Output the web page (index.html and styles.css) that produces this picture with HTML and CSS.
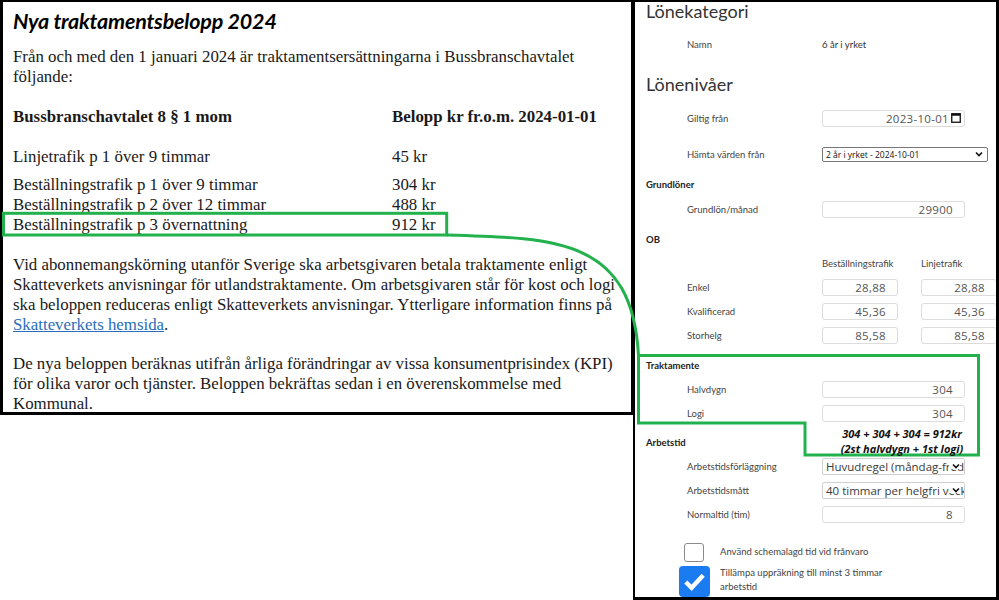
FILE: index.html
```html
<!DOCTYPE html>
<html lang="sv">
<head>
  <meta charset="UTF-8">
  <meta name="viewport" content="width=device-width, initial-scale=1.0">
  <title>Traktamente 2024</title>
  <link rel="stylesheet" href="styles.css">
</head>
<body>
  <div class="sheet">
    <article class="notice">
      <h1>Nya traktamentsbelopp 2024</h1>
      <p class="intro">Från och med den 1 januari 2024 är traktamentsersättningarna i Bussbranschavtalet<br>följande:</p>
      <div class="rates">
        <div class="rates-head"><span>Bussbranschavtalet 8 § 1 mom</span><span>Belopp kr fr.o.m. 2024-01-01</span></div>
        <div class="rate rate-first"><span>Linjetrafik p 1 över 9 timmar</span><span>45 kr</span></div>
        <div class="rate rate-group"><span>Beställningstrafik p 1 över 9 timmar</span><span>304 kr</span></div>
        <div class="rate"><span>Beställningstrafik p 2 över 12 timmar</span><span>488 kr</span></div>
        <div class="rate"><span>Beställningstrafik p 3 övernattning</span><span>912 kr</span></div>
      </div>
      <p class="body-text">Vid abonnemangskörning utanför Sverige ska arbetsgivaren betala traktamente enligt<br>Skatteverkets anvisningar för utlandstraktamente. Om arbetsgivaren står för kost och logi<br>ska beloppen reduceras enligt Skatteverkets anvisningar. Ytterligare information finns på<br><a href="#">Skatteverkets hemsida</a>.</p>
      <p class="body-text last">De nya beloppen beräknas utifrån årliga förändringar av vissa konsumentprisindex (KPI)<br>för olika varor och tjänster. Beloppen bekräftas sedan i en överenskommelse med<br>Kommunal.</p>
    </article>

    <section class="form-panel">
      <h2 class="panel-title">Lönekategori</h2>
      <div class="field f-name"><span class="label">Namn</span><span class="value">6 år i yrket</span></div>

      <h2 class="panel-title f-levels">Lönenivåer</h2>
      <div class="field f-gap"><span class="label">Giltig från</span>
        <div class="box date">2023-10-01
          <svg class="cal" viewBox="0 0 10 10" width="10" height="10"><rect x="0.75" y="0.75" width="8.5" height="8.5" fill="none" stroke="#111" stroke-width="1.3"/><rect x="0.75" y="0.75" width="8.5" height="2" fill="#111"/></svg>
        </div>
      </div>
      <div class="field f-gap"><span class="label">Hämta värden från</span>
        <div class="box select small">2 år i yrket - 2024-10-01<svg class="chev" viewBox="0 0 8 6" width="8" height="6"><path d="M1 1.5 L4 4.5 L7 1.5" fill="none" stroke="#111" stroke-width="1.6"/></svg></div>
      </div>

      <h3 class="group g-base">Grundlöner</h3>
      <div class="field f-tight"><span class="label">Grundlön/månad</span><div class="box num">29900</div></div>

      <h3 class="group g-ob">OB</h3>
      <div class="field cols f-cols"><span class="label"></span><div class="pair"><span>Beställningstrafik</span><span>Linjetrafik</span></div></div>
      <div class="field f-tight"><span class="label">Enkel</span><div class="pair"><div class="box num half">28,88</div><div class="box num half">28,88</div></div></div>
      <div class="field"><span class="label">Kvalificerad</span><div class="pair"><div class="box num half">45,36</div><div class="box num half">45,36</div></div></div>
      <div class="field"><span class="label">Storhelg</span><div class="pair"><div class="box num half">85,58</div><div class="box num half">85,58</div></div></div>

      <h3 class="group g-trakt">Traktamente</h3>
      <div class="field f-snug"><span class="label">Halvdygn</span><div class="box num">304</div></div>
      <div class="field"><span class="label">Logi</span><div class="box num">304</div></div>

      <h3 class="group g-work">Arbetstid</h3>
      <div class="field f-snug"><span class="label">Arbetstidsförläggning</span>
        <div class="box select">Huvudregel (måndag-fredag)<svg class="chev" viewBox="0 0 8 6" width="8" height="6"><path d="M1 1.5 L4 4.5 L7 1.5" fill="none" stroke="#111" stroke-width="1.6"/></svg></div>
      </div>
      <div class="field"><span class="label">Arbetstidsmått</span>
        <div class="box select">40 timmar per helgfri vecka<svg class="chev" viewBox="0 0 8 6" width="8" height="6"><path d="M1 1.5 L4 4.5 L7 1.5" fill="none" stroke="#111" stroke-width="1.6"/></svg></div>
      </div>
      <div class="field"><span class="label">Normaltid (tim)</span><div class="box num">8</div></div>

      <div class="check c-first"><span class="tick"></span><span class="check-label">Använd schemalagd tid vid frånvaro</span></div>
      <div class="check c-second"><span class="tick on"><svg viewBox="0 0 32 32" width="31" height="31"><path d="M7 16.5 L13 22.5 L25 9.5" fill="none" stroke="#fff" stroke-width="4.5"/></svg></span><span class="check-label">Tillämpa uppräkning till minst 3 timmar<br>arbetstid</span></div>
    </section>

    <!-- green callout from the rate row to the traktamente fields -->
    <svg class="marks" viewBox="0 0 999 600" width="999" height="600">
      <rect x="3.5" y="213.3" width="443.2" height="21.7" fill="none" stroke="#22b14c" stroke-width="3"/>
      <path d="M446.7 235 C560 238, 632 240, 638.5 355.5" fill="none" stroke="#22b14c" stroke-width="3"/>
      <path d="M638.5 355.5 H978.5 V455 H805 V423 H638.5 Z" fill="none" stroke="#22b14c" stroke-width="3"/>
    </svg>
    <div class="mark-note">304 + 304 + 304 = 912kr<br>(2st halvdygn + 1st logi)</div>
  </div>
</body>
</html>
```

FILE: styles.css
```css
body {
  margin: 0;
  background: #fff;
}
.sheet {
  position: relative;
  display: flex;
  align-items: flex-start;
  width: 999px;
  height: 600px;
  overflow: hidden;
}

/* left: the notice */
.notice {
  box-sizing: border-box;
  width: 633px;
  height: 415px;
  border: 2px solid #000;
  border-left-width: 3px;
  border-bottom-width: 3px;
  padding: 0 10px;
  font-family: "Liberation Serif", serif;
  font-size: 16.85px;
  line-height: 20px;
  color: #1a1a1a;
  white-space: nowrap;
}
.notice h1 {
  margin: 5px 0 0;
  font-family: Lato, sans-serif;
  font-style: italic;
  font-weight: 700;
  font-size: 21.5px;
  letter-spacing: -0.2px;
  line-height: 28px;
  color: #000;
}
.intro {
  margin: 12px 0 0;
}
.rates {
  margin-top: 20px;
}
.rate,
.rates-head {
  display: grid;
  grid-template-columns: 379px 1fr;
}
.rates-head {
  font-weight: 700;
}
.rate-first {
  margin-top: 20px;
}
.rate-group {
  margin-top: 8px;
}
.body-text {
  margin: 20px 0 0;
}
.body-text.last {
  margin-top: 19px;
}
.body-text a {
  color: #2a6ebb;
}

/* right: the salary form */
.form-panel {
  box-sizing: border-box;
  width: 366px;
  height: 600px;
  border: 2px solid #000;
  border-right-width: 3px;
  border-bottom-width: 3px;
  font-family: Lato, sans-serif;
  font-size: 9.5px;
  color: #444;
  overflow: hidden;
}
.panel-title {
  margin: -1px 0 0 11px;
  font-size: 18px;
  font-weight: 400;
  line-height: 20px;
  color: #333;
}
.panel-title.f-levels {
  margin-top: 18px;
}
.group {
  margin: 9px 0 0 11px;
  font-size: 9.5px;
  font-weight: 700;
  line-height: 20px;
  color: #222;
}
.g-trakt {
  margin-top: 9px;
}
.g-work {
  margin-top: 8px;
}
.field {
  display: grid;
  grid-template-columns: 135px 1fr;
  align-items: center;
  height: 24px;
  padding-left: 52px;
}
.f-name {
  margin-top: 11px;
}
.f-gap {
  margin-top: 12px;
}
.f-tight {
  margin-top: 2px;
}
.f-snug {
  margin-top: 1px;
}
.f-cols {
  height: 20px;
  margin-top: 3px;
}
.label {
  white-space: nowrap;
}
.value {
  color: #333;
}
.pair {
  display: flex;
  gap: 23px;
}
.cols .pair span {
  width: 76px;
}
.box {
  box-sizing: border-box;
  display: flex;
  align-items: center;
  width: 143px;
  height: 17px;
  border: 1px solid #dcdcdc;
  border-radius: 3px;
  padding: 0 11px;
  font-family: "Open Sans", sans-serif;
  font-size: 11.5px;
  color: #555;
  white-space: nowrap;
  overflow: hidden;
}
.box.half {
  width: 76px;
  flex-shrink: 0;
}
.num,
.date {
  justify-content: flex-end;
  letter-spacing: 0.3px;
}
.date {
  padding-right: 3px;
  gap: 2px;
}
.cal {
  flex-shrink: 0;
}
.select {
  position: relative;
  padding: 0 16px 0 3px;
  border-color: #d0d0d0;
  border-radius: 2px;
  color: #3a3a3a;
}
.select.small {
  width: 166px;
  height: 15px;
  font-size: 8.5px;
  border-color: #777;
  color: #111;
}
.chev {
  position: absolute;
  right: 4px;
  top: 50%;
  margin-top: -3px;
  background: #fff;
  box-shadow: -3px 0 0 #fff;
}
.check {
  display: grid;
  grid-template-columns: 40px 1fr;
  align-items: center;
  padding-left: 39px;
}
.c-first {
  margin-top: 16px;
  height: 20px;
}
.c-second {
  margin-top: 4px;
  align-items: start;
}
.tick {
  justify-self: center;
  box-sizing: border-box;
  width: 20px;
  height: 19px;
  border: 1px solid #8a8a8a;
  border-radius: 3px;
}
.tick.on {
  width: 31px;
  height: 31px;
  border: none;
  border-radius: 4px;
  background: #1a7cf0;
}
.tick.on svg {
  display: block;
}
.check-label {
  padding-left: 6px;
  line-height: 14px;
}

/* callout overlay */
.marks {
  position: absolute;
  left: 0;
  top: 0;
  pointer-events: none;
}
.mark-note {
  position: absolute;
  left: 830px;
  top: 426px;
  width: 144px;
  text-align: center;
  font-family: "Open Sans", sans-serif;
  font-size: 11px;
  font-weight: 700;
  font-style: italic;
  line-height: 15px;
  color: #111;
}
```
